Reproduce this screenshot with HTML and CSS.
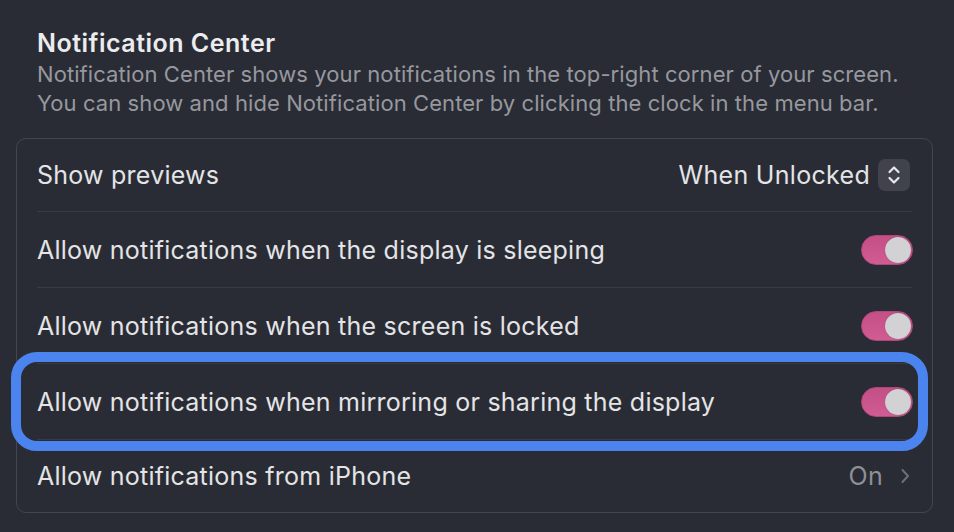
FILE: index.html
```html
<!DOCTYPE html>
<html lang="en">
<head>
<meta charset="utf-8">
<title>Notification Center</title>
<link rel="stylesheet" href="styles.css">
</head>
<body>
<div class="page">
  <header class="section-head">
    <h2 class="section-title">Notification Center</h2>
    <p class="section-desc">Notification Center shows your notifications in the top-right corner of your screen.<br>You can show and hide Notification Center by clicking the clock in the menu bar.</p>
  </header>
  <div class="card">
    <div class="row row-first">
      <div class="row-inner">
        <span class="label">Show previews</span>
        <span class="popup">
          <span class="popup-value">When Unlocked</span>
          <span class="stepper">
            <svg width="14" height="20" viewBox="0 0 14 20" fill="none" stroke="#e8e8ea" stroke-width="2.2" stroke-linecap="round" stroke-linejoin="round"><path d="M2.5 7 L7 2.5 L11.5 7"/><path d="M2.5 13 L7 17.5 L11.5 13"/></svg>
          </span>
        </span>
      </div>
    </div>
    <div class="row">
      <div class="row-inner">
        <span class="label">Allow notifications when the display is sleeping</span>
        <span class="toggle"><span class="knob"></span></span>
      </div>
    </div>
    <div class="row">
      <div class="row-inner">
        <span class="label">Allow notifications when the screen is locked</span>
        <span class="toggle"><span class="knob"></span></span>
      </div>
    </div>
    <div class="row row-highlight">
      <div class="row-inner">
        <span class="label">Allow notifications when mirroring or sharing the display</span>
        <span class="toggle"><span class="knob"></span></span>
      </div>
    </div>
    <div class="row row-last">
      <div class="row-inner">
        <span class="label">Allow notifications from iPhone</span>
        <span class="detail">
          <span class="detail-value">On</span>
          <svg width="12" height="18" viewBox="0 0 12 18" fill="none" stroke="#6e7078" stroke-width="2" stroke-linecap="round" stroke-linejoin="round"><path d="M3.5 3 L9 9 L3.5 15"/></svg>
        </span>
      </div>
    </div>
  </div>
</div>
</body>
</html>
```
FILE: styles.css
```css
html, body {
  margin: 0;
  padding: 0;
  background: #292c35;
}
body {
  font-family: Inter, "Noto Sans", "Liberation Sans", sans-serif;
  color: #e4e4e6;
  width: 954px;
  height: 532px;
  overflow: hidden;
}
.page {
  padding: 0 21px 0 16px;
}
.section-head {
  padding: 28px 0 0 21px;
  height: 110px;
  box-sizing: border-box;
}
.section-title {
  margin: 0;
  font-size: 25px;
  line-height: 30px;
  font-weight: 600;
  color: #ececee;
  letter-spacing: 0.5px;
}
.section-desc {
  margin: 2px 0 0;
  font-size: 22px;
  line-height: 29px;
  color: #97989e;
  letter-spacing: 0.08px;
}
.card {
  border: 1px solid #43464f;
  border-radius: 10px;
  margin-top: 28px;
}
.row {
  padding: 0 20px;
}
.row-inner {
  height: 75px;
  border-top: 1px solid #383b44;
  display: flex;
  align-items: center;
  justify-content: space-between;
}
.row-first .row-inner {
  border-top: none;
  height: 72px;
}
.row-last .row-inner {
  height: 72px;
}
.label {
  font-size: 25px;
  letter-spacing: 0.24px;
  color: #e4e4e6;
}
.popup {
  display: flex;
  align-items: center;
  gap: 8px;
  margin-right: 2px;
}
.popup-value {
  font-size: 25px;
  letter-spacing: 0.3px;
  color: #e4e4e6;
}
.stepper {
  width: 32px;
  height: 32px;
  border-radius: 7px;
  background: #40434c;
  display: flex;
  align-items: center;
  justify-content: center;
}
.toggle {
  width: 52px;
  height: 30px;
  box-sizing: border-box;
  border-radius: 15px;
  background: linear-gradient(#c44f86, #d05c93);
  border: 1px solid #b0477a;
  display: flex;
  align-items: center;
  justify-content: flex-end;
  padding-right: 1px;
  margin-right: -1px;
}
.knob {
  width: 26px;
  height: 26px;
  border-radius: 50%;
  background: #d2d2d4;
  box-shadow: 0 0 1px rgba(0,0,0,0.4);
}
.row-highlight {
  position: relative;
}
.row-highlight::after {
  content: "";
  position: absolute;
  left: -6px;
  right: 4px;
  top: -11px;
  bottom: -12px;
  border: 10px solid #4b84ef;
  border-radius: 26px;
  pointer-events: none;
}
.detail {
  display: flex;
  align-items: center;
  gap: 16px;
  margin-right: 1px;
}
.detail-value {
  font-size: 25px;
  letter-spacing: 0.3px;
  color: #8f9096;
}
```
